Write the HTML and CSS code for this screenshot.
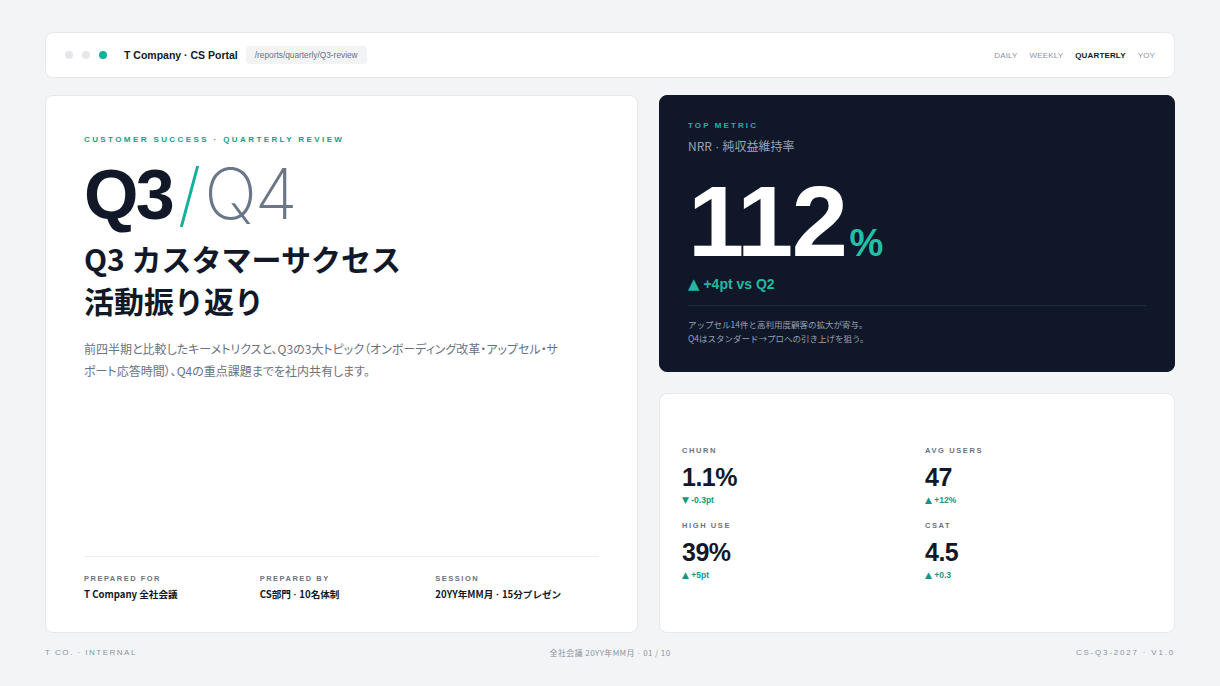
FILE: index.html
```html
<!DOCTYPE html>
<html lang="ja">
<head>
<meta charset="utf-8">
<title>T Company · CS Portal</title>
<link rel="stylesheet" href="styles.css">
</head>
<body>
<div class="page">
  <header class="topbar">
    <div class="dots"><span class="dot"></span><span class="dot"></span><span class="dot on"></span></div>
    <div class="brand">T Company · CS Portal</div>
    <div class="path">/reports/quarterly/Q3-review</div>
    <nav class="nav">
      <span>DAILY</span><span>WEEKLY</span><span class="active">QUARTERLY</span><span>YOY</span>
    </nav>
  </header>

  <main class="grid">
    <section class="card hero">
      <div class="eyebrow">CUSTOMER SUCCESS · QUARTERLY REVIEW</div>
      <div class="qq"><span class="q3">Q3</span><span class="slash">/</span><span class="q4">Q4</span></div>
      <h1 class="title">Q3 カスタマーサクセス<br>活動振り返り</h1>
      <p class="lead">前四半期と比較したキーメトリクスと、Q3の3大トピック（オンボーディング改革・アップセル・サ<br>ポート応答時間）、Q4の重点課題までを社内共有します。</p>
      <div class="meta">
        <div class="meta-item"><div class="label">PREPARED FOR</div><div class="value">T Company 全社会議</div></div>
        <div class="meta-item"><div class="label">PREPARED BY</div><div class="value">CS部門<span class="sep"> · </span>10名体制</div></div>
        <div class="meta-item"><div class="label">SESSION</div><div class="value">20YY年MM月<span class="sep"> · </span>15分プレゼン</div></div>
      </div>
    </section>

    <div class="side">
      <section class="card dark">
        <div class="dk-eyebrow">TOP METRIC</div>
        <div class="dk-sub">NRR<span class="sep"> · </span>純収益維持率</div>
        <div class="big"><span class="num">112</span><span class="pct">%</span></div>
        <div class="dk-delta"><span class="tri">▲</span> +4pt vs Q2</div>
        <div class="dk-note">アップセル14件と高利用度顧客の拡大が寄与。<br>Q4はスタンダード→プロへの引き上げを狙う。</div>
      </section>

      <section class="card stats">
        <div class="stat-grid">
          <div class="stat"><div class="s-label">CHURN</div><div class="s-val">1.1%</div><div class="s-delta"><span class="tri">▼</span> -0.3pt</div></div>
          <div class="stat"><div class="s-label">AVG USERS</div><div class="s-val">47</div><div class="s-delta"><span class="tri">▲</span> +12%</div></div>
          <div class="stat"><div class="s-label">HIGH USE</div><div class="s-val">39%</div><div class="s-delta"><span class="tri">▲</span> +5pt</div></div>
          <div class="stat"><div class="s-label">CSAT</div><div class="s-val">4.5</div><div class="s-delta"><span class="tri">▲</span> +0.3</div></div>
        </div>
      </section>
    </div>
  </main>

  <footer class="foot">
    <span class="f-left">T CO. · INTERNAL</span>
    <span class="f-mid">全社会議 20YY年MM月<span class="sep"> · </span>01 / 10</span>
    <span class="f-right">CS-Q3-2027 · V1.0</span>
  </footer>
</div>
</body>
</html>
```

FILE: styles.css
```css
* { box-sizing: border-box; margin: 0; padding: 0; }
html, body { background: #f3f4f6; }
body {
  font-family: "Liberation Sans", "Noto Sans CJK JP", sans-serif;
  color: #0f172a;
  width: 1220px;
  height: 686px;
  overflow: hidden;
}
.page { padding: 32px 45px 0; }
.sep { font-family: "Liberation Sans", sans-serif; }

.topbar {
  height: 46px;
  background: #fff;
  border: 1px solid #e6e8ec;
  border-radius: 8px;
  display: flex;
  align-items: center;
  padding: 0 19px;
}
.dots { display: flex; gap: 9px; }
.dot { width: 8px; height: 8px; border-radius: 50%; background: #e5e7eb; }
.dot.on { background: #14b19a; }
.brand { margin-left: 17px; font-size: 10.5px; font-weight: 700; color: #111827; }
.path {
  margin-left: 8px;
  background: #f1f3f5;
  border-radius: 4px;
  height: 18px;
  line-height: 18px;
  padding: 0 9px;
  font-size: 8.3px;
  color: #6b7280;
}
.nav { margin-left: auto; display: flex; gap: 12px; font-size: 8px; letter-spacing: 0.15px; color: #8b93a1; }
.nav .active { color: #111827; font-weight: 700; }

.grid {
  margin-top: 17px;
  display: grid;
  grid-template-columns: 593px 516px;
  gap: 21px;
  height: 538px;
}
.card { background: #fff; border: 1px solid #e6e8ec; border-radius: 8px; }

.hero { display: flex; flex-direction: column; padding: 38px 38px 29px; }
.eyebrow { font-size: 8px; line-height: 12px; font-weight: 700; letter-spacing: 2.4px; color: #14a08a; }
.qq { margin-top: 11px; height: 74px; line-height: 74px; font-size: 70px; white-space: nowrap; }
.q3 { font-weight: 700; letter-spacing: -0.04em; color: #111827; }
.slash { font-family: "Inter", "Liberation Sans", sans-serif; font-weight: 200; color: #14b19a; margin: 0 3px 0 6px; }
.q4 { font-family: "Inter", "Liberation Sans", sans-serif; font-weight: 200; color: #6b7789; letter-spacing: -0.03em; }
.title {
  margin-top: 6px;
  font-family: "Noto Sans CJK JP", sans-serif;
  font-size: 30px;
  line-height: 42px;
  font-weight: 700;
  color: #111827;
}
.lead {
  margin-top: 17px;
  font-family: "Noto Sans CJK JP", sans-serif;
  font-size: 12px;
  line-height: 21.5px;
  color: #6b7280;
  max-width: 500px;
  font-feature-settings: "palt" 1;
}
.meta {
  margin-top: auto;
  border-top: 1px solid #eceef1;
  padding-top: 16px;
  display: grid;
  grid-template-columns: repeat(3, 1fr);
  gap: 12px;
}
.label { font-size: 7.5px; line-height: 12px; font-weight: 700; letter-spacing: 1.5px; color: #6b7280; }
.value { margin-top: 1px; font-family: "Noto Sans CJK JP", sans-serif; font-size: 9.6px; line-height: 16px; font-weight: 700; color: #111827; }
.value .sep { font-weight: 700; }

.side { display: grid; grid-template-rows: 277px 240px; gap: 21px; }
.dark { background: #0f1729; border-color: #0f1729; padding: 24px 28px 0; }
.dk-eyebrow { font-size: 8px; line-height: 12px; font-weight: 700; letter-spacing: 2.1px; color: #14b8a6; }
.dk-sub { margin-top: 6px; font-family: "Noto Sans CJK JP", sans-serif; font-size: 12px; line-height: 16px; color: #9aa4b4; }
.big { margin-top: 16px; line-height: 1; height: 103px; white-space: nowrap; }
.num { font-size: 101px; font-weight: 700; color: #fff; letter-spacing: -0.015em; }
.pct { font-size: 38px; font-weight: 700; color: #22c0a8; margin-left: 3px; }
.dk-delta { margin-top: 1px; font-size: 14px; line-height: 18px; font-weight: 700; color: #22b8a0; }
.dk-delta .tri { font-family: "DejaVu Sans", sans-serif; font-size: 15px; }
.dk-note {
  margin-top: 12px;
  border-top: 1px solid #1f2a3c;
  padding-top: 11px;
  font-family: "Noto Sans CJK JP", sans-serif;
  font-size: 8.5px;
  line-height: 14px;
  color: #95a0b0;
}

.stats { display: flex; align-items: center; padding: 0 22px; }
.stat-grid { width: 100%; display: grid; grid-template-columns: 1fr 1fr; column-gap: 16px; row-gap: 14px; }
.s-label { font-size: 7.5px; line-height: 12px; font-weight: 700; letter-spacing: 1.6px; color: #6b7280; }
.s-val { margin-top: 6px; font-size: 25px; line-height: 28px; font-weight: 700; color: #111827; letter-spacing: -0.5px; }
.s-delta { margin-top: 3px; font-size: 8.5px; line-height: 12px; font-weight: 700; color: #14957f; }
.s-delta .tri { font-family: "DejaVu Sans", sans-serif; font-size: 9px; }

.foot {
  margin-top: 13px;
  display: flex;
  justify-content: space-between;
  align-items: center;
  height: 12px;
  font-size: 8px;
  color: #8b93a1;
}
.f-left { letter-spacing: 1.5px; width: 300px; }
.f-mid { font-family: "Noto Sans CJK JP", sans-serif; letter-spacing: 0.4px; }
.f-right { letter-spacing: 1.8px; width: 300px; text-align: right; }
```
